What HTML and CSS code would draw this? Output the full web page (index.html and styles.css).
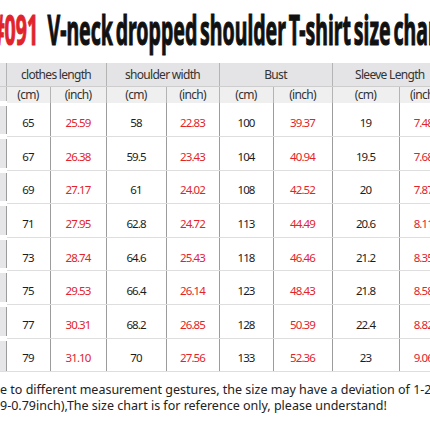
FILE: index.html
```html
<!DOCTYPE html>
<html lang="en">
<head>
    <meta charset="UTF-8">
    <meta name="viewport" content="width=device-width, initial-scale=1.0">
    <title>#091 V-neck dropped shoulder T-shirt size chart</title>
    <link rel="stylesheet" href="styles.css">
</head>
<body>
    <h1 class="title"><span class="title-text"><span class="code">#091</span>V-neck dropped shoulder T-shirt size chart</span></h1>
    <div class="chart">
        <table class="sizes">
            <colgroup>
                <col class="c-size">
                <col class="c1"><col class="c2">
                <col class="c3"><col class="c4">
                <col class="c5"><col class="c6">
                <col class="c7"><col class="c8">
            </colgroup>
            <thead>
                <tr class="groups">
                    <th class="size"></th>
                    <th colspan="2">clothes length</th>
                    <th colspan="2">shoulder width</th>
                    <th colspan="2">Bust</th>
                    <th colspan="2">Sleeve Length</th>
                </tr>
                <tr class="units">
                    <th class="size"></th>
                    <th>(cm)</th><th class="inch">(inch)</th>
                    <th>(cm)</th><th class="inch">(inch)</th>
                    <th>(cm)</th><th class="inch">(inch)</th>
                    <th>(cm)</th><th class="inch">(inch)</th>
                </tr>
            </thead>
            <tbody>
                <tr><td class="size"></td><td>65</td><td class="inch">25.59</td><td>58</td><td class="inch">22.83</td><td>100</td><td class="inch">39.37</td><td>19</td><td class="inch">7.48</td></tr>
                <tr><td class="size"></td><td>67</td><td class="inch">26.38</td><td>59.5</td><td class="inch">23.43</td><td>104</td><td class="inch">40.94</td><td>19.5</td><td class="inch">7.68</td></tr>
                <tr><td class="size"></td><td>69</td><td class="inch">27.17</td><td>61</td><td class="inch">24.02</td><td>108</td><td class="inch">42.52</td><td>20</td><td class="inch">7.87</td></tr>
                <tr><td class="size"></td><td>71</td><td class="inch">27.95</td><td>62.8</td><td class="inch">24.72</td><td>113</td><td class="inch">44.49</td><td>20.6</td><td class="inch">8.11</td></tr>
                <tr><td class="size"></td><td>73</td><td class="inch">28.74</td><td>64.6</td><td class="inch">25.43</td><td>118</td><td class="inch">46.46</td><td>21.2</td><td class="inch">8.35</td></tr>
                <tr><td class="size"></td><td>75</td><td class="inch">29.53</td><td>66.4</td><td class="inch">26.14</td><td>123</td><td class="inch">48.43</td><td>21.8</td><td class="inch">8.58</td></tr>
                <tr><td class="size"></td><td>77</td><td class="inch">30.31</td><td>68.2</td><td class="inch">26.85</td><td>128</td><td class="inch">50.39</td><td>22.4</td><td class="inch">8.82</td></tr>
                <tr><td class="size"></td><td>79</td><td class="inch">31.10</td><td>70</td><td class="inch">27.56</td><td>133</td><td class="inch">52.36</td><td>23</td><td class="inch">9.06</td></tr>
            </tbody>
        </table>
    </div>
    <p class="note">e to different measurement gestures, the size may have a deviation of 1-2cm<br>9-0.79inch),The size chart is for reference only, please understand!</p>
</body>
</html>
```

FILE: styles.css
```css
* {
    margin: 0;
    padding: 0;
    box-sizing: border-box;
}
body {
    width: 430px;
    height: 430px;
    overflow: hidden;
    background-color: #ffffff;
    font-family: "Noto Sans", "Liberation Sans", sans-serif;
    color: #222222;
}
.title {
    height: 63px;
    padding-top: 8px;
    font-size: 42px;
    line-height: 42px;
    font-weight: 700;
    color: #111111;
    white-space: nowrap;
    overflow: hidden;
}
.title-text {
    display: inline-block;
    transform: scaleX(0.465);
    transform-origin: 0 0;
    margin-left: -8px;
    word-spacing: -5px;
    -webkit-text-stroke: 1.2px currentColor;
}
.code {
    color: #e1232b;
    margin-right: 20px;
}
.chart {
    width: 430px;
    overflow: hidden;
}
.sizes {
    border-collapse: collapse;
    table-layout: fixed;
    width: 447px;
}
.c-size { width: 6px; }
.c1 { width: 44px; }
.c2 { width: 56px; }
.c3 { width: 60px; }
.c4 { width: 53px; }
.c5 { width: 54px; }
.c6 { width: 59px; }
.c7 { width: 67px; }
.c8 { width: 48px; }
th, td {
    text-align: center;
    white-space: nowrap;
    overflow: hidden;
    font-weight: 400;
}
.groups th {
    height: 23px;
    background-color: #e4e4e6;
    font-size: 12px;
    letter-spacing: -0.7px;
    color: #333333;
    border-left: 1px solid #b4b4b4;
    border-bottom: 1px solid #cdcdcd;
}
.units th {
    height: 17px;
    background-color: #efeff0;
    font-size: 12px;
    line-height: 16px;
    letter-spacing: -0.7px;
    color: #333333;
    border-left: 1px solid #b4b4b4;
}
tbody td {
    height: 33.6px;
    padding-top: 6px;
    font-size: 11.5px;
    letter-spacing: -0.9px;
    color: #1c1c1c;
    border-left: 1px solid #9c9c9c;
    border-bottom: 1px solid #dedede;
}
th.size, td.size {
    background-color: #e6e6e8;
    border-left: none;
}
tbody td.size {
    border-top: 5px solid #ffffff;
}
.inch {
    color: #e1232b;
}
.note {
    margin-top: 10px;
    font-size: 12.5px;
    line-height: 16px;
    color: #222222;
    white-space: nowrap;
    overflow: hidden;
}
```
